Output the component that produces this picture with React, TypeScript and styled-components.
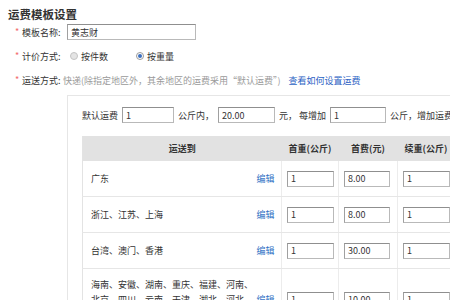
import React from 'react';
import styled, { createGlobalStyle } from 'styled-components';

const GlobalStyle = createGlobalStyle`
  html, body {
    margin: 0;
    padding: 0;
    background: #fff;
    overflow: hidden;
  }
  body {
    font-family: "Noto Sans CJK SC", "Liberation Sans", sans-serif;
    font-size: 9px;
    color: #333;
  }
`;

type Rule = {
  region: string[];
  firstWeight: string;
  firstFee: string;
  nextWeight: string;
};

const RULES: Rule[] = [
  { region: ['广东'], firstWeight: '1', firstFee: '8.00', nextWeight: '1' },
  { region: ['浙江、江苏、上海'], firstWeight: '1', firstFee: '8.00', nextWeight: '1' },
  { region: ['台湾、澳门、香港'], firstWeight: '1', firstFee: '30.00', nextWeight: '1' },
  {
    region: ['海南、安徽、湖南、重庆、福建、河南、', '北京、四川、云南、天津、湖北、河北、', '山东、山西、陕西、江西、广西、贵州'],
    firstWeight: '1',
    firstFee: '10.00',
    nextWeight: '1',
  },
];

const ShippingTemplate = () => {
  return (
    <>
      <GlobalStyle />
      <Page>
        <Title>运费模板设置</Title>

        <FormRow>
          <Label>模板名称:</Label>
          <TextInput width={129} defaultValue="黄志财" />
        </FormRow>

        <FormRow>
          <Label>计价方式:</Label>
          <RadioGroup>
            <RadioItem>
              <Radio />
              按件数
            </RadioItem>
            <RadioItem>
              <Radio checked />
              按重量
            </RadioItem>
          </RadioGroup>
        </FormRow>

        <FormRow>
          <Label>运送方式:</Label>
          <Hint>快递(除指定地区外，其余地区的运费采用“默认运费”)</Hint>
          <HelpLink href="#">查看如何设置运费</HelpLink>
        </FormRow>

        <Panel>
          <DefaultRow>
            默认运费
            <TextInput width={52} defaultValue="1" />
            公斤内，
            <TextInput width={57} defaultValue="20.00" />
            元，&nbsp;每增加
            <TextInput width={56} defaultValue="1" />
            公斤，增加运费
          </DefaultRow>

          <Table>
            <colgroup>
              <col style={{ width: 172 }} />
              <col style={{ width: 27 }} />
              <col style={{ width: 57 }} />
              <col style={{ width: 59 }} />
              <col style={{ width: 57 }} />
              <col style={{ width: 60 }} />
            </colgroup>
            <thead>
              <tr>
                <HeadCell colSpan={2}>运送到</HeadCell>
                <HeadCell>首重(公斤)</HeadCell>
                <HeadCell>首费(元)</HeadCell>
                <HeadCell>续重(公斤)</HeadCell>
                <HeadCell>续费(元)</HeadCell>
              </tr>
            </thead>
            <tbody>
              {RULES.map((rule, i) => (
                <tr key={i}>
                  <RegionCell>
                    {rule.region.map((line) => (
                      <div key={line}>{line}</div>
                    ))}
                  </RegionCell>
                  <EditCell>
                    <EditLink href="#">编辑</EditLink>
                  </EditCell>
                  <Cell>
                    <TextInput width={47} defaultValue={rule.firstWeight} />
                  </Cell>
                  <Cell>
                    <TextInput width={46} defaultValue={rule.firstFee} />
                  </Cell>
                  <Cell>
                    <TextInput width={47} defaultValue={rule.nextWeight} />
                  </Cell>
                  <Cell>
                    <TextInput width={47} defaultValue="1.00" />
                  </Cell>
                </tr>
              ))}
            </tbody>
          </Table>
        </Panel>
      </Page>
    </>
  );
};

export default ShippingTemplate;

const Page = styled.div`
  padding: 6px 0 0 8px;
  width: 560px;
`;

const Title = styled.h2`
  margin: 0;
  font-size: 11.5px;
  line-height: 16px;
  font-weight: bold;
  color: #333;
`;

const FormRow = styled.div`
  display: flex;
  align-items: center;
  height: 20px;
  margin-top: 4px;
  padding-left: 7px;

  &:first-of-type {
    margin-top: 0;
  }
`;

const Label = styled.span`
  position: relative;
  width: 41px;
  padding-left: 7px;
  flex-shrink: 0;
  color: #333;
  white-space: nowrap;

  &::before {
    content: '*';
    position: absolute;
    left: 0;
    top: -1px;
    color: #f26a6a;
  }
`;

const TextInput = styled.input.attrs({ type: 'text' })<{ width: number }>`
  box-sizing: border-box;
  width: ${(p) => p.width}px;
  height: 16px;
  margin: 0 4px;
  padding: 0 3px;
  border: 1px solid #b9b9b9;
  border-top-color: #8f8f8f;
  border-left-color: #a0a0a0;
  font-family: "Noto Sans CJK SC", "Liberation Sans", sans-serif;
  font-size: 9px;
  color: #333;
  background: #fff;
  outline: none;
`;

const RadioGroup = styled.div`
  display: flex;
  align-items: center;
  gap: 28px;
  margin-left: 7px;
`;

const RadioItem = styled.label`
  display: flex;
  align-items: center;
  gap: 3px;
  color: #333;
`;

const Radio = styled.span<{ checked?: boolean }>`
  position: relative;
  box-sizing: border-box;
  width: 8px;
  height: 8px;
  border-radius: 50%;
  border: 1px solid ${(p) => (p.checked ? '#9a9a9a' : '#c4c4c4')};
  background: ${(p) => (p.checked ? '#fff' : '#e4e4e4')};

  &::after {
    content: '';
    display: ${(p) => (p.checked ? 'block' : 'none')};
    position: absolute;
    left: 1px;
    top: 1px;
    width: 4px;
    height: 4px;
    border-radius: 50%;
    background: #3b6fc0;
  }
`;

const Hint = styled.span`
  color: #9a9a9a;
  white-space: nowrap;
`;

const HelpLink = styled.a`
  margin-left: 8px;
  color: #2d63c4;
  text-decoration: none;
  white-space: nowrap;
`;

const Panel = styled.div`
  margin: 5px 0 0 59px;
  padding: 9px 0 0 14px;
  border: 1px solid #e6e6e6;
  border-right: none;
  border-bottom: none;
`;

const DefaultRow = styled.div`
  display: flex;
  align-items: center;
  height: 20px;
  white-space: nowrap;
  color: #333;
  margin-bottom: 11px;
`;

const Table = styled.table`
  border-collapse: collapse;
  table-layout: fixed;
  width: 432px;
  border-left: 1px solid #e3e3e3;
`;

const HeadCell = styled.th`
  height: 25px;
  padding: 0;
  background: #e2e2e2;
  font-weight: bold;
  color: #333;
  text-align: center;
`;

const Cell = styled.td`
  height: 35px;
  padding: 0;
  border-bottom: 1px solid #e6e6e6;
  border-left: 1px solid #ececec;
  vertical-align: middle;

  input {
    margin: 0 0 0 5px;
  }
`;

const RegionCell = styled.td`
  height: 19px;
  padding: 8px 0 8px 8px;
  border-bottom: 1px solid #e6e6e6;
  line-height: 15px;
  color: #333;
  vertical-align: middle;
  white-space: nowrap;
  overflow: hidden;
`;

const EditCell = styled.td`
  padding: 0 0 0 2px;
  border-bottom: 1px solid #e6e6e6;
  vertical-align: middle;
  white-space: nowrap;
`;

const EditLink = styled.a`
  color: #2f6fc4;
  text-decoration: none;
`;
